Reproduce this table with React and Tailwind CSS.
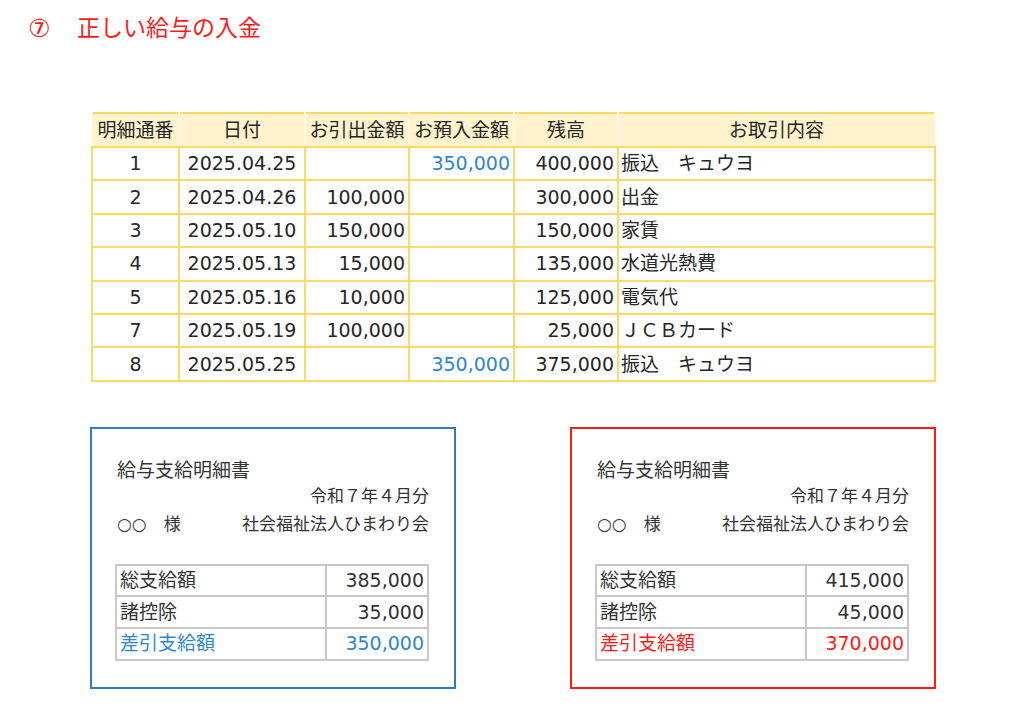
const font = {
  fontFamily: '"DejaVu Sans", "Noto Sans CJK JP", sans-serif',
};

const rows = [
  ["1", "2025.04.25", "", "350,000", "400,000", "振込　キュウヨ"],
  ["2", "2025.04.26", "100,000", "", "300,000", "出金"],
  ["3", "2025.05.10", "150,000", "", "150,000", "家賃"],
  ["4", "2025.05.13", "15,000", "", "135,000", "水道光熱費"],
  ["5", "2025.05.16", "10,000", "", "125,000", "電気代"],
  ["7", "2025.05.19", "100,000", "", "25,000", "ＪＣＢカード"],
  ["8", "2025.05.25", "", "350,000", "375,000", "振込　キュウヨ"],
];

const headers = ["明細通番", "日付", "お引出金額", "お預入金額", "残高", "お取引内容"];
const widths = ["w-[87px]", "w-[126px]", "w-[104px]", "w-[105px]", "w-[104px]", "w-[317px]"];

const Passbook = () => {
  return (
    <table className="border-collapse border-2 border-[#ffd966] text-[19px] text-[#262626] table-fixed w-[843px]">
      <thead>
        <tr className="h-[34px] bg-[#fff2cc]">
          {headers.map((h, i) => (
            <th
              key={h}
              className={`${widths[i]} font-normal text-center leading-none border-b-2 border-b-[#ffd966] border-x-2 border-x-[#fff8e6] p-0`}
            >
              {h}
            </th>
          ))}
        </tr>
      </thead>
      <tbody>
        {rows.map((r) => (
          <tr key={r[0]} className="h-[33.4px]">
            <td className="border-2 border-[#ffd966] text-center leading-none p-0">{r[0]}</td>
            <td className="border-2 border-[#ffd966] text-center leading-none p-0">{r[1]}</td>
            <td className="border-2 border-[#ffd966] text-right leading-none p-0 pr-[3px]">{r[2]}</td>
            <td className="border-2 border-[#ffd966] text-right leading-none p-0 pr-[3px] text-[#2f86cf]">{r[3]}</td>
            <td className="border-2 border-[#ffd966] text-right leading-none p-0 pr-[3px]">{r[4]}</td>
            <td className="border-2 border-[#ffd966] text-left leading-none p-0 pl-[2px]">{r[5]}</td>
          </tr>
        ))}
      </tbody>
    </table>
  );
};

const PaySlip = ({ frame, accent, gross, deduction, net }) => {
  return (
    <div className={`w-[366px] h-[262px] border-2 ${frame} pt-[27px] pl-[25px] pr-[25px] text-[#333]`}>
      <p className="text-[19px] leading-[28px]">給与支給明細書</p>
      <p className="text-[17px] leading-[27px] text-right mt-[-1px]">令和７年４月分</p>
      <div className="flex justify-between text-[17px] leading-[28px]">
        <span>○○　様</span>
        <span>社会福祉法人ひまわり会</span>
      </div>
      <table className="mt-[26px] border-collapse border-2 border-[#c8c8c8] w-[314px] ml-[-2px] text-[19px]">
        <tbody>
          <tr className="h-[31.6px]">
            <td className="border-2 border-[#c8c8c8] pl-[3px] leading-none w-[210px]">総支給額</td>
            <td className="border-2 border-[#c8c8c8] pr-[3px] text-right leading-none">{gross}</td>
          </tr>
          <tr className="h-[31.6px]">
            <td className="border-2 border-[#c8c8c8] pl-[3px] leading-none">諸控除</td>
            <td className="border-2 border-[#c8c8c8] pr-[3px] text-right leading-none">{deduction}</td>
          </tr>
          <tr className={`h-[31.6px] ${accent}`}>
            <td className="border-2 border-[#c8c8c8] pl-[3px] leading-none">差引支給額</td>
            <td className="border-2 border-[#c8c8c8] pr-[3px] text-right leading-none">{net}</td>
          </tr>
        </tbody>
      </table>
    </div>
  );
};

export default function App() {
  return (
    <div className="w-[1024px] h-[707px] bg-white overflow-hidden" style={font}>
      <h1 className="flex items-center h-[56px] pl-[28px] text-[23px] text-[#ff1a1a] leading-none">
        <span className="w-[49px] text-[25px]">⑦</span>
        <span>正しい給与の入金</span>
      </h1>
      <div className="pl-[91px] pt-[56px]">
        <Passbook />
      </div>
      <div className="flex justify-between pl-[90px] pr-[88px] mt-[45px]">
        <PaySlip
          frame="border-[#2f7cc0]"
          accent="text-[#2f86cf]"
          gross="385,000"
          deduction="35,000"
          net="350,000"
        />
        <PaySlip
          frame="border-[#ff1a1a]"
          accent="text-[#ff1a1a]"
          gross="415,000"
          deduction="45,000"
          net="370,000"
        />
      </div>
    </div>
  );
}
